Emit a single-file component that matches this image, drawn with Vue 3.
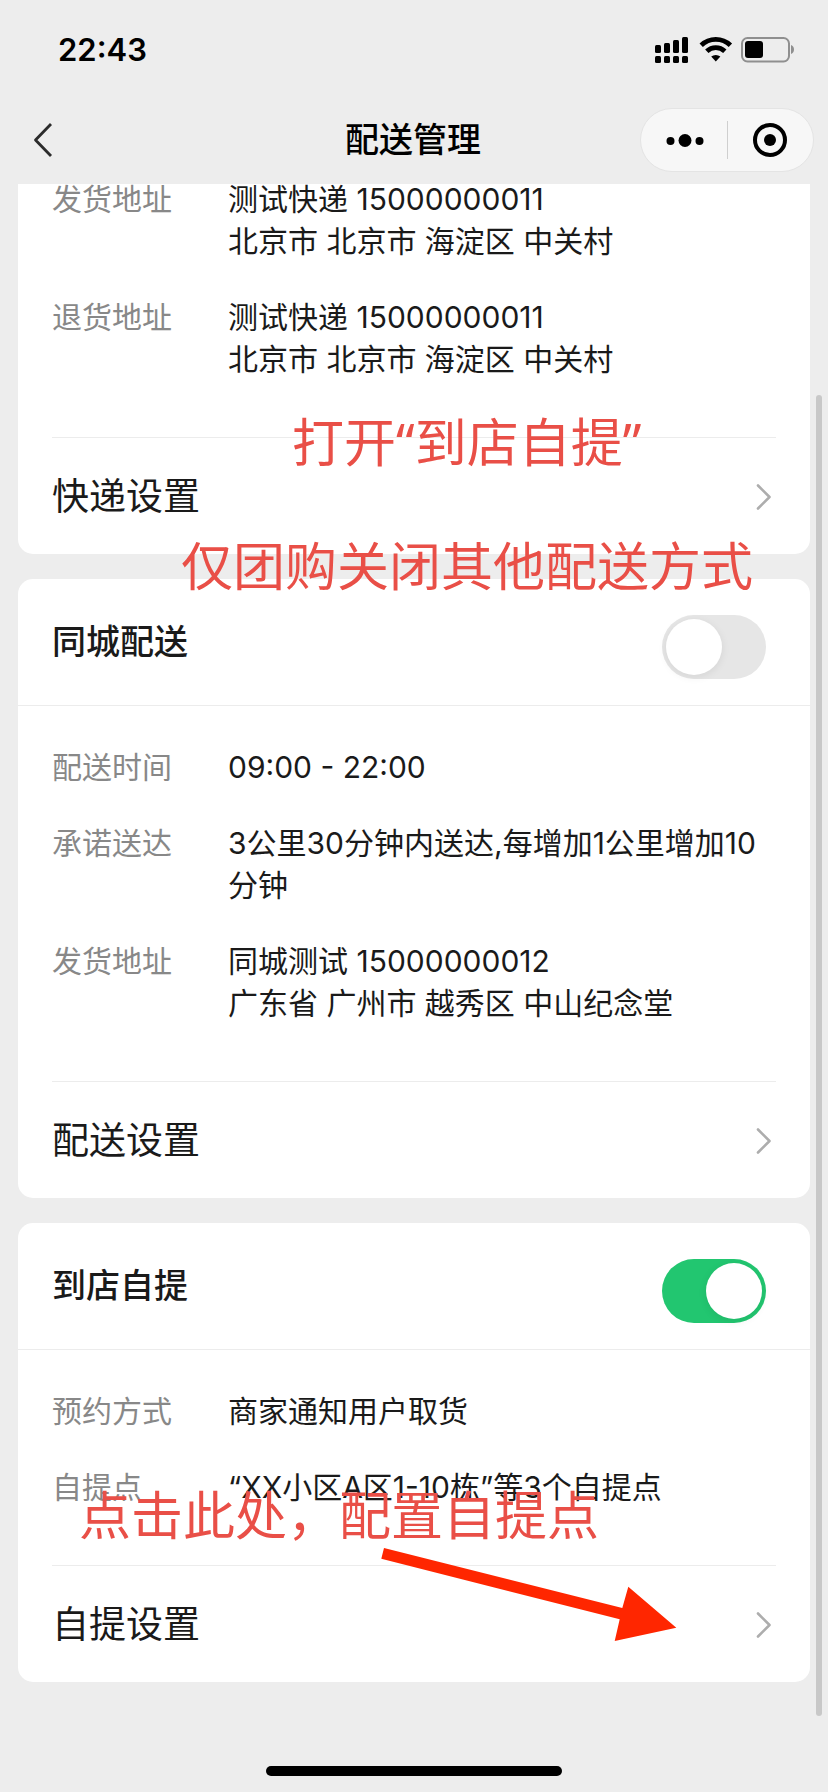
<script setup>
import { ref } from 'vue'

const cards = ref([
  {
    id: 'express',
    rows: [
      { label: '发货地址', lines: ['测试快递 15000000011', '北京市 北京市 海淀区 中关村'] },
      { label: '退货地址', lines: ['测试快递 15000000011', '北京市 北京市 海淀区 中关村'] }
    ],
    action: '快递设置'
  },
  {
    id: 'city',
    title: '同城配送',
    enabled: false,
    rows: [
      { label: '配送时间', lines: ['09:00 - 22:00'] },
      { label: '承诺送达', lines: ['3公里30分钟内送达,每增加1公里增加10分钟'] },
      { label: '发货地址', lines: ['同城测试 15000000012', '广东省 广州市 越秀区 中山纪念堂'] }
    ],
    action: '配送设置'
  },
  {
    id: 'pickup',
    title: '到店自提',
    enabled: true,
    rows: [
      { label: '预约方式', lines: ['商家通知用户取货'] },
      { label: '自提点', lines: ['“XX小区A区1-10栋”等3个自提点'] }
    ],
    action: '自提设置'
  }
])
</script>

<template>
  <div class="page" lang="zh-CN">
    <header class="top">
      <div class="status">
        <time class="clock">22:43</time>
        <svg class="status-icons" width="140" height="28" viewBox="0 0 140 28" aria-hidden="true">
          <g>
            <rect x="0" y="9" width="6" height="8" rx="1.5" />
            <rect x="9" y="7" width="6" height="10" rx="1.5" />
            <rect x="18" y="4" width="6" height="13" rx="1.5" />
            <rect x="27" y="1" width="6" height="16" rx="1.5" />
            <rect x="0" y="20" width="6" height="7" rx="1.5" />
            <rect x="9" y="20" width="6" height="7" rx="1.5" />
            <rect x="18" y="20" width="6" height="7" rx="1.5" />
            <rect x="27" y="20" width="6" height="7" rx="1.5" />
          </g>
          <g fill="none" stroke="#000" stroke-width="4.8">
            <path d="M46.2 9.2 A21 21 0 0 1 75.4 9.2" />
            <path d="M51.8 15.2 A13 13 0 0 1 69.8 15.2" />
          </g>
          <path d="M60.8 25.4 L56.2 20.6 A7 7 0 0 1 65.4 20.6 Z" />
          <rect x="87" y="2" width="47" height="23.5" rx="5.5" fill="none" stroke="#8f8f8f" stroke-width="2" />
          <rect x="90" y="5" width="18" height="17" rx="3" />
          <path d="M136 9 Q139 10.200 139 13.500 Q139 16.800 136 18 Z" fill="#8f8f8f" />
        </svg>
      </div>
      <nav class="nav">
        <button class="back" type="button" aria-label="返回">
          <svg width="22" height="38" viewBox="0 0 22 38" fill="none" stroke="#2b2b2b" stroke-width="2.8">
            <path d="M19 3 L3.500 19 L19 35" stroke-linejoin="round" />
          </svg>
        </button>
        <h1 class="nav-title">配送管理</h1>
        <div class="capsule">
          <button type="button" class="capsule-btn" aria-label="更多">
            <svg width="40" height="16" viewBox="0 0 40 16">
              <circle cx="6.500" cy="9" r="4" />
              <circle cx="21" cy="8.500" r="6.500" />
              <circle cx="35.500" cy="9" r="4" />
            </svg>
          </button>
          <span class="capsule-line"></span>
          <button type="button" class="capsule-btn" aria-label="关闭">
            <svg width="36" height="36" viewBox="0 0 36 36">
              <circle cx="18" cy="18" r="15" fill="none" stroke="#000" stroke-width="4" />
              <circle cx="18" cy="18" r="6" />
            </svg>
          </button>
        </div>
      </nav>
    </header>

    <main class="list">
      <section v-for="card in cards" :key="card.id" class="card" :class="{ cut: !card.title }">
        <div v-if="card.title" class="card-head">
          <label class="card-title" :for="card.id">{{ card.title }}</label>
          <input :id="card.id" v-model="card.enabled" class="switch" type="checkbox" role="switch" />
        </div>
        <dl class="rows">
          <div v-for="row in card.rows" :key="row.label" class="row">
            <dt>{{ row.label }}</dt>
            <dd>
              <div v-for="line in row.lines" :key="line">{{ line }}</div>
            </dd>
          </div>
        </dl>
        <button type="button" class="action">
          <span>{{ card.action }}</span>
          <svg width="24" height="30" viewBox="0 0 24 30" fill="none" stroke="#adadad" stroke-width="2.600">
            <path d="M6 3.500 L17.500 15 L6 26.500" stroke-linecap="round" stroke-linejoin="round" />
          </svg>
        </button>
      </section>
    </main>

    <p class="note note-open">打开“到店自提”</p>
    <p class="note note-close">仅团购关闭其他配送方式</p>
    <p class="note note-tap">点击此处，配置自提点</p>
    <svg class="arrow" width="296" height="94" viewBox="0 0 296 94" aria-hidden="true">
      <path d="M3 0 L241.300 60 L247.300 38.700 L295.300 79.700 L233.700 93 L238.700 71.300 L0.300 10.700 Z" fill="#ff2600" />
    </svg>
    <div class="scrollbar"></div>
    <div class="home"></div>
  </div>
</template>

<style>
body {
  margin: 0;
  background: #ededed;
}
</style>

<style scoped>
.page {
  position: relative;
  display: flex;
  flex-direction: column;
  min-height: 100vh;
  overflow: hidden;
  background: #ededed;
  color: #1a1a1a;
  font-family: Inter, "Noto Sans CJK SC", sans-serif;
  font-size: 30px;
  line-height: 42px;
}

button {
  margin: 0;
  padding: 0;
  border: 0;
  background: none;
  color: inherit;
  font: inherit;
}

.status {
  display: flex;
  align-items: center;
  justify-content: space-between;
  height: 96px;
  padding: 4px 33px 0 58px;
  box-sizing: border-box;
  color: #000;
}

.clock {
  font-size: 31px;
  font-weight: 600;
}

.nav {
  display: grid;
  grid-template-columns: 1fr auto 1fr;
  align-items: center;
  height: 88px;
  padding: 0 14px 0 32px;
}

.back {
  display: flex;
  justify-self: start;
}

.nav-title {
  margin: 0 20px 0 0;
  color: #000;
  font-size: 34px;
  font-weight: 500;
}

.capsule {
  display: flex;
  align-items: center;
  justify-self: end;
  width: 174px;
  height: 64px;
  box-sizing: border-box;
  border: 1px solid #e4e4e4;
  border-radius: 32px;
  background: #f7f7f7;
}

.capsule-btn {
  display: flex;
  flex: 1;
  align-items: center;
  justify-content: center;
}

.capsule-line {
  width: 1px;
  height: 38px;
  background: #cfcfcf;
}

.list {
  display: flex;
  flex: 1;
  flex-direction: column;
  gap: 25px;
  padding: 0 18px 109px;
  overflow: hidden;
}

.card {
  border-radius: 15px;
  background: #fff;
}

.card.cut {
  margin-top: -46px;
}

.card-head {
  display: flex;
  align-items: flex-start;
  justify-content: space-between;
  padding: 36px 44px 26px 34px;
  border-bottom: 1px solid #ececec;
}

.card-title {
  font-size: 34px;
  font-weight: 500;
  line-height: 54px;
}

.switch {
  appearance: none;
  width: 104px;
  height: 64px;
  margin: 0;
  padding: 4px;
  box-sizing: border-box;
  border-radius: 32px;
  background: #e6e6e6;
}

.switch::before {
  content: "";
  display: block;
  width: 56px;
  height: 56px;
  border-radius: 50%;
  background: #fff;
  box-shadow: 0 2px 8px rgba(0, 0, 0, 0.08);
}

.switch:checked {
  background: #22c670;
}

.switch:checked::before {
  margin-left: auto;
}

.rows {
  display: flex;
  flex-direction: column;
  gap: 34px;
  margin: 0;
  padding: 40px 34px 57px;
}

.row {
  display: grid;
  grid-template-columns: 176px 1fr;
}

dt {
  color: #888;
}

dd {
  margin: 0;
}

.action {
  display: flex;
  align-items: center;
  justify-content: space-between;
  width: calc(100% - 68px);
  height: 117px;
  margin: 0 34px;
  padding-top: 2px;
  box-sizing: border-box;
  border-top: 1px solid #ececec;
  font-size: 37px;
}

.note {
  position: absolute;
  margin: 0;
  color: #e94f47;
  font-family: "Noto Sans", "Noto Sans CJK SC", sans-serif;
  font-size: 52px;
  line-height: 60px;
  white-space: nowrap;
}

.note-open {
  top: 412px;
  left: 292px;
}

.note-close {
  top: 536px;
  left: 181px;
}

.note-tap {
  top: 1485px;
  left: 79px;
}

.arrow {
  position: absolute;
  top: 1548px;
  left: 381px;
}

.scrollbar {
  position: absolute;
  top: 395px;
  right: 6px;
  bottom: 76px;
  width: 6px;
  border-radius: 3px;
  background: #c8c8c8;
}

.home {
  position: absolute;
  bottom: 16px;
  left: 50%;
  width: 296px;
  height: 10px;
  margin-left: -148px;
  border-radius: 5px;
  background: #000;
}
</style>
